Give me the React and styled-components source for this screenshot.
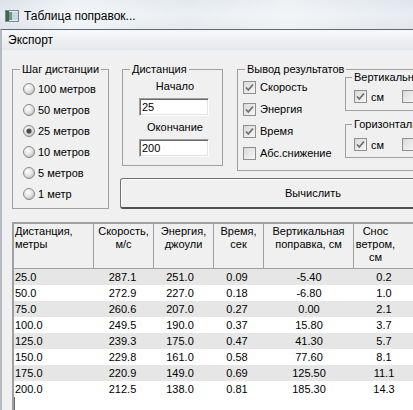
import React from 'react';
import styled, { createGlobalStyle } from 'styled-components';

const Global = createGlobalStyle`
  html, body { margin: 0; padding: 0; }
  body {
    width: 413px; height: 410px; overflow: hidden; background: #f0f0f0;
    font-family: "Liberation Sans", Arial, sans-serif; font-size: 11px; color: #000;
  }
`;

const Window = styled.div`
  width: 413px; height: 410px; overflow: hidden;
  display: flex; flex-direction: column;
`;

const TitleBar = styled.div`
  flex: none; height: 29px; box-sizing: border-box;
  display: flex; align-items: center; gap: 5px; padding: 3px 0 0 5px;
  background:
    linear-gradient(90deg, rgba(255,255,255,0.1) 0%, rgba(255,255,255,0.6) 18%, rgba(255,255,255,0.3) 45%, rgba(255,255,255,0.55) 70%, rgba(255,255,255,0.2) 100%),
    linear-gradient(180deg, #d6dee7 0%, #e3e9ef 50%, #d9e0e8 100%);
  font-size: 12px; color: #000;
`;

const MenuBar = styled.div`
  flex: none; height: 21px; box-sizing: border-box;
  border-top: 1px solid #5f6973; border-left: 2px solid #b3bac2;
  display: flex; align-items: center; padding-left: 6px;
  background: linear-gradient(180deg, #f7f8fa 0%, #eceff2 60%, #e6e9ec 100%);
  font-size: 12px;
`;

const Body = styled.div`
  flex: 1; min-height: 0; box-sizing: border-box;
  border-left: 2px solid #b3bac2;
  padding: 13px 0 0 10px;
  display: flex; flex-direction: column;
  background: #f0f0f0;
`;

const TopRow = styled.div`
  display: flex; align-items: flex-start; flex: none;
`;

const RightCol = styled.div`
  display: flex; flex-direction: column; margin-left: 11px; flex: none;
`;

const GroupRow = styled.div`
  display: flex; align-items: flex-start; gap: 14px; margin-left: 2px;
`;

const Group = styled.fieldset`
  margin: 0; padding: 0; min-width: 0; flex: none;
  box-sizing: border-box;
  width: ${p => p.$w}px; height: ${p => p.$h}px;
  border: 1px solid #a0a0a0;
  border-radius: 0;
`;

const Legend = styled.legend`
  padding: 0 2px; margin-left: ${p => p.$ml || 7}px;
  line-height: 13px; font-size: 11px; white-space: nowrap;
`;

const RadioList = styled.div`
  display: flex; flex-direction: column; padding: 2px 0 0 10px;
`;

const OptionRow = styled.label`
  display: flex; align-items: center; gap: ${p => p.$gap || 3}px;
  height: ${p => p.$h || 21}px; white-space: nowrap;
  margin-left: ${p => p.$ml || 0}px;
`;

const CenterCol = styled.div`
  display: flex; flex-direction: column; align-items: center; padding-left: 3px;
`;

const Caption = styled.div`
  line-height: 13px; margin-top: ${p => p.$mt}px; padding-left: ${p => p.$pl || 0}px;
`;

const TextBox = styled.input`
  box-sizing: border-box; width: 70px; height: 18px; margin: ${p => p.$mt}px 0 0 0;
  padding: 0 0 0 2px;
  font-family: "Liberation Sans", Arial, sans-serif; font-size: 11px; color: #000;
  background: #fff;
  border: 1px solid; border-color: #a0a0a0 #fff #fff #a0a0a0;
  box-shadow: inset 1px 1px 0 #696969, inset -1px -1px 0 #e3e3e3;
  outline: none;
`;

const OutputBody = styled.div`
  display: flex; align-items: flex-start;
`;

const CheckList = styled.div`
  display: flex; flex-direction: column; width: 102px; padding-left: 5px; flex: none;
`;

const SubGroups = styled.div`
  display: flex; flex-direction: column; gap: 7px; margin-top: -5px;
`;

const SubRow = styled.div`
  display: flex; align-items: center; padding: ${p => p.$pt}px 0 0 8px;
`;

const CalcButton = styled.button`
  margin-top: 7px; width: 386px; height: 31px; box-sizing: border-box;
  font-family: "Liberation Sans", Arial, sans-serif; font-size: 11px; color: #000;
  background: #f0f0f0;
  border: 1px solid #707070; border-bottom: 2px solid #505050;
  border-radius: 3px;
  box-shadow: inset 1px 1px 0 #fff;
  padding: 0;
`;

const Table = styled.div`
  margin-top: 13px; flex: 1; min-height: 0; width: 440px;
  border-top: 2px solid #a0a0a0; border-left: 2px solid #a0a0a0;
  box-shadow: inset 1px 1px 0 #696969;
  background: #fff; overflow: hidden;
`;

const cols = '80px 60px 60px 50px 90px 60px 1fr';

const HeaderRow = styled.div`
  display: grid; grid-template-columns: ${cols};
  height: 45px; box-sizing: border-box;
  border-bottom: 1px solid #a0a0a0; background: #f0f0f0;
`;

const HeadCell = styled.div`
  border-right: ${p => (p.$last ? 'none' : '1px solid #a0a0a0')};
  padding: 1px ${p => p.$pr || 0}px 0 ${p => (p.$left ? 1 : 0)}px;
  line-height: 13px;
  text-align: ${p => (p.$left ? 'left' : 'center')};
`;

const DataRow = styled.div`
  display: grid; grid-template-columns: ${cols};
  height: 16px; line-height: 16px;
  background: ${p => (p.$odd ? '#e6e6e6' : '#fff')};
`;

const Cell = styled.div`
  text-align: ${p => (p.$left ? 'left' : 'center')};
  padding: 0 ${p => p.$pr || 0}px 0 ${p => (p.$left ? 1 : 0)}px;
  white-space: nowrap;
`;

const AppIcon = () => (
  <svg width="14" height="12" viewBox="0 0 14 12">
    <rect x="0.5" y="0.5" width="13" height="11" fill="#e9eef3" stroke="#7d8792" />
    <rect x="1" y="1" width="3" height="10" fill="#4e5961" />
    <rect x="4" y="2" width="3" height="8" fill="#59a866" />
    <rect x="7" y="2" width="6" height="8" fill="#c6d8e6" />
  </svg>
);

const Radio = ({ checked }) => (
  <svg width="12" height="12" viewBox="0 0 12 12">
    <defs>
      <radialGradient id="rg" cx="40%" cy="35%" r="70%">
        <stop offset="0" stopColor="#ffffff" />
        <stop offset="0.6" stopColor="#e0e0e0" />
        <stop offset="1" stopColor="#b8b8b8" />
      </radialGradient>
    </defs>
    <circle cx="6" cy="6" r="5.5" fill="url(#rg)" stroke="#8a8a8a" />
    {checked && <circle cx="6" cy="6" r="2.6" fill="#4a4a4a" />}
  </svg>
);

const Check = ({ checked }) => (
  <svg width="13" height="13" viewBox="0 0 13 13">
    <defs>
      <linearGradient id="cg" x1="0" y1="0" x2="1" y2="1">
        <stop offset="0" stopColor="#d8d8d8" />
        <stop offset="1" stopColor="#f8f8f8" />
      </linearGradient>
    </defs>
    <rect x="0.5" y="0.5" width="12" height="12" fill="url(#cg)" stroke="#8e8f8f" />
    {checked && (
      <path d="M3 6.5 L5.3 9 L10 3.5" fill="none" stroke="#707070" strokeWidth="1.8" />
    )}
  </svg>
);

const steps = [
  ['100 метров', false],
  ['50 метров', false],
  ['25 метров', true],
  ['10 метров', false],
  ['5 метров', false],
  ['1 метр', false],
];

const outputs = [
  ['Скорость', true],
  ['Энергия', true],
  ['Время', true],
  ['Абс.снижение', false],
];

const rows = [
  ['25.0', '287.1', '251.0', '0.09', '-5.40', '0.2'],
  ['50.0', '272.9', '227.0', '0.18', '-6.80', '1.0'],
  ['75.0', '260.6', '207.0', '0.27', '0.00', '2.1'],
  ['100.0', '249.5', '190.0', '0.37', '15.80', '3.7'],
  ['125.0', '239.3', '175.0', '0.47', '41.30', '5.7'],
  ['150.0', '229.8', '161.0', '0.58', '77.60', '8.1'],
  ['175.0', '220.9', '149.0', '0.69', '125.50', '11.1'],
  ['200.0', '212.5', '138.0', '0.81', '185.30', '14.3'],
];

const cellPad = [0, 3, 8, 4, 0, 0];

const UnitGroup = ({ title, pt }) => (
  <Group $w={130} $h={40}>
    <Legend $ml={6}>{title}</Legend>
    <SubRow $pt={pt}>
      <OptionRow $h={17} $gap={4}>
        <Check checked />
        <span>см</span>
      </OptionRow>
      <OptionRow $h={17} $ml={18}>
        <Check />
      </OptionRow>
    </SubRow>
  </Group>
);

export default function App() {
  return (
    <>
      <Global />
      <Window>
        <TitleBar>
          <AppIcon />
          <span>Таблица поправок...</span>
        </TitleBar>
        <MenuBar>Экспорт</MenuBar>
        <Body>
          <TopRow>
            <Group $w={97} $h={146}>
              <Legend $ml={7}>Шаг дистанции</Legend>
              <RadioList>
                {steps.map(([t, c]) => (
                  <OptionRow key={t}>
                    <Radio checked={c} />
                    <span>{t}</span>
                  </OptionRow>
                ))}
              </RadioList>
            </Group>
            <RightCol>
              <GroupRow>
                <Group $w={101} $h={103}>
                  <Legend $ml={7}>Дистанция</Legend>
                  <CenterCol>
                    <Caption $mt={4} $pl={2}>Начало</Caption>
                    <TextBox $mt={5} defaultValue="25" readOnly />
                    <Caption $mt={5} $pl={2}>Окончание</Caption>
                    <TextBox $mt={5} defaultValue="200" readOnly />
                  </CenterCol>
                </Group>
                <Group $w={290} $h={108}>
                  <Legend $ml={7}>Вывод результатов</Legend>
                  <OutputBody>
                    <CheckList>
                      {outputs.map(([t, c]) => (
                        <OptionRow key={t} $h={22} $gap={4}>
                          <Check checked={c} />
                          <span>{t}</span>
                        </OptionRow>
                      ))}
                    </CheckList>
                    <SubGroups>
                      <UnitGroup title="Вертикальная" pt={4} />
                      <UnitGroup title="Горизонтальная" pt={5} />
                    </SubGroups>
                  </OutputBody>
                </Group>
              </GroupRow>
              <CalcButton>Вычислить</CalcButton>
            </RightCol>
          </TopRow>
          <Table>
            <HeaderRow>
              <HeadCell $left>Дистанция,<br />метры</HeadCell>
              <HeadCell>Скорость,<br />м/с</HeadCell>
              <HeadCell>Энергия,<br />джоули</HeadCell>
              <HeadCell>Время,<br />сек</HeadCell>
              <HeadCell>Вертикальная<br />поправка, см</HeadCell>
              <HeadCell $pr={16}>Снос<br />ветром,<br />см</HeadCell>
              <HeadCell $last />
            </HeaderRow>
            {rows.map((r, i) => (
              <DataRow key={r[0]} $odd={i % 2 === 0}>
                {r.map((v, j) => (
                  <Cell key={j} $left={j === 0} $pr={cellPad[j]}>{v}</Cell>
                ))}
                <Cell />
              </DataRow>
            ))}
          </Table>
        </Body>
      </Window>
    </>
  );
}
